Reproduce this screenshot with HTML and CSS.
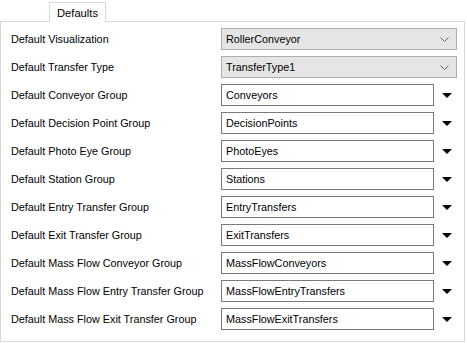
FILE: index.html
```html
<!DOCTYPE html>
<html lang="en">
<head>
    <meta charset="UTF-8">
    <title>Defaults</title>
    <link rel="stylesheet" href="styles.css">
</head>
<body>
    <div class="tabs">
        <div class="tab">Defaults</div>
    </div>
    <div class="panel">
        <div class="row">
            <span class="label">Default Visualization</span>
            <div class="select"><span>RollerConveyor</span><svg class="chev" width="9" height="5" viewBox="0 0 9 5"><path d="M0.5 0.5 L4.5 4.5 L8.5 0.5" fill="none" stroke="#606060" stroke-width="1"/></svg></div>
        </div>
        <div class="row">
            <span class="label">Default Transfer Type</span>
            <div class="select"><span>TransferType1</span><svg class="chev" width="9" height="5" viewBox="0 0 9 5"><path d="M0.5 0.5 L4.5 4.5 L8.5 0.5" fill="none" stroke="#606060" stroke-width="1"/></svg></div>
        </div>
        <div class="row">
            <span class="label">Default Conveyor Group</span>
            <div class="combo"><span class="edit">Conveyors</span><span class="arrow"></span></div>
        </div>
        <div class="row">
            <span class="label">Default Decision Point Group</span>
            <div class="combo"><span class="edit">DecisionPoints</span><span class="arrow"></span></div>
        </div>
        <div class="row">
            <span class="label">Default Photo Eye Group</span>
            <div class="combo"><span class="edit">PhotoEyes</span><span class="arrow"></span></div>
        </div>
        <div class="row">
            <span class="label">Default Station Group</span>
            <div class="combo"><span class="edit">Stations</span><span class="arrow"></span></div>
        </div>
        <div class="row">
            <span class="label">Default Entry Transfer Group</span>
            <div class="combo"><span class="edit">EntryTransfers</span><span class="arrow"></span></div>
        </div>
        <div class="row">
            <span class="label">Default Exit Transfer Group</span>
            <div class="combo"><span class="edit">ExitTransfers</span><span class="arrow"></span></div>
        </div>
        <div class="row">
            <span class="label">Default Mass Flow Conveyor Group</span>
            <div class="combo"><span class="edit">MassFlowConveyors</span><span class="arrow"></span></div>
        </div>
        <div class="row">
            <span class="label">Default Mass Flow Entry Transfer Group</span>
            <div class="combo"><span class="edit">MassFlowEntryTransfers</span><span class="arrow"></span></div>
        </div>
        <div class="row">
            <span class="label">Default Mass Flow Exit Transfer Group</span>
            <div class="combo"><span class="edit">MassFlowExitTransfers</span><span class="arrow"></span></div>
        </div>
    </div>
</body>
</html>
```

FILE: styles.css
```css
body {
    margin: 0;
    background: #ffffff;
    font-family: "Liberation Sans", Arial, sans-serif;
    font-size: 10.8px;
    color: #000000;
}
.tabs {
    display: flex;
    padding-left: 49px;
    padding-top: 1px;
}
.tab {
    width: 55px;
    height: 19px;
    border: 1px solid #d9d9d9;
    border-bottom: none;
    background: #ffffff;
    display: flex;
    align-items: center;
    justify-content: center;
    position: relative;
    top: 1px;
    font-size: 11.2px;
}
.panel {
    width: 463px;
    height: 313px;
    border: 1px solid #d9d9d9;
    padding-top: 6px;
}
.row {
    display: flex;
    align-items: center;
    height: 22px;
    margin-bottom: 6px;
    padding-left: 10px;
}
.label {
    width: 210px;
}
.select {
    width: 236px;
    height: 22px;
    border: 1px solid #adadad;
    background: #e5e5e5;
    display: flex;
    align-items: center;
    justify-content: space-between;
    padding: 0 7px 0 4px;
    box-sizing: border-box;
}
.combo {
    display: flex;
    align-items: center;
}
.edit {
    width: 213px;
    height: 22px;
    border: 1px solid #7a7a7a;
    box-sizing: border-box;
    padding-left: 4px;
    display: flex;
    align-items: center;
}
.arrow {
    margin-left: 8px;
    width: 0;
    height: 0;
    border-left: 5px solid transparent;
    border-right: 5px solid transparent;
    border-top: 5px solid #000000;
}
```
